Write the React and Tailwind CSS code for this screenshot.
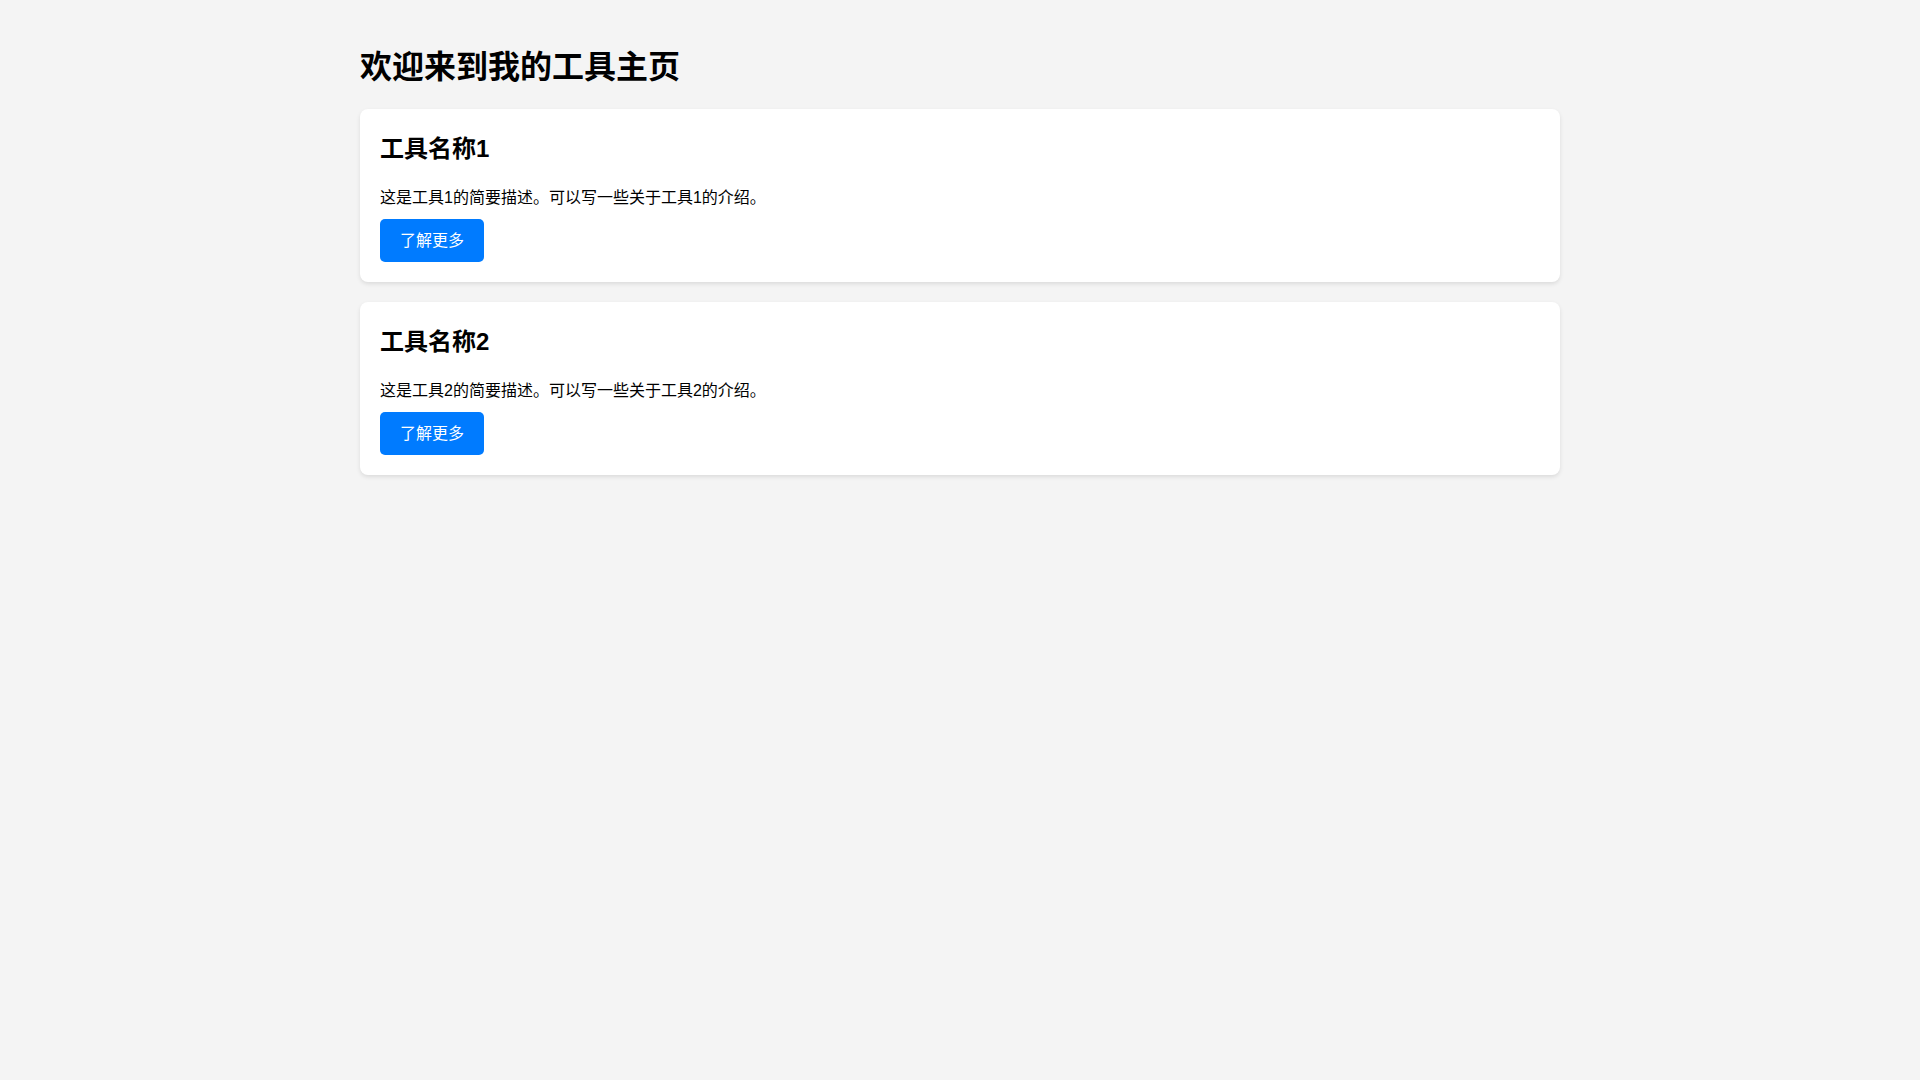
import React from 'react';

const tools = [
  { name: '工具名称1', desc: '这是工具1的简要描述。可以写一些关于工具1的介绍。' },
  { name: '工具名称2', desc: '这是工具2的简要描述。可以写一些关于工具2的介绍。' },
];

const ToolCard = ({ name, desc }) => (
  <div className="bg-white rounded-lg p-5 mb-5 shadow-[0_2px_4px_rgba(0,0,0,0.1)]">
    <h2 className="text-[24px] font-bold leading-[35px] pt-[2px] mb-[20px] text-black">{name}</h2>
    <p className="text-base leading-[23px] mb-[10px] text-black">{desc}</p>
    <button className="bg-[#007bff] text-white text-base leading-[23px] px-5 py-[10px] rounded-[5px]">
      了解更多
    </button>
  </div>
);

export default function App() {
  return (
    <div
      className="min-h-screen bg-[#f4f4f4] p-5"
      style={{ fontFamily: '"Liberation Sans", "Noto Sans CJK SC", sans-serif' }}
    >
      <div className="max-w-[1200px] mx-auto">
        <h1 className="text-[32px] font-bold leading-[46px] mt-[24px] mb-[19px] text-black">
          欢迎来到我的工具主页
        </h1>
        {tools.map((tool, index) => (
          <ToolCard key={index} {...tool} />
        ))}
      </div>
    </div>
  );
}
